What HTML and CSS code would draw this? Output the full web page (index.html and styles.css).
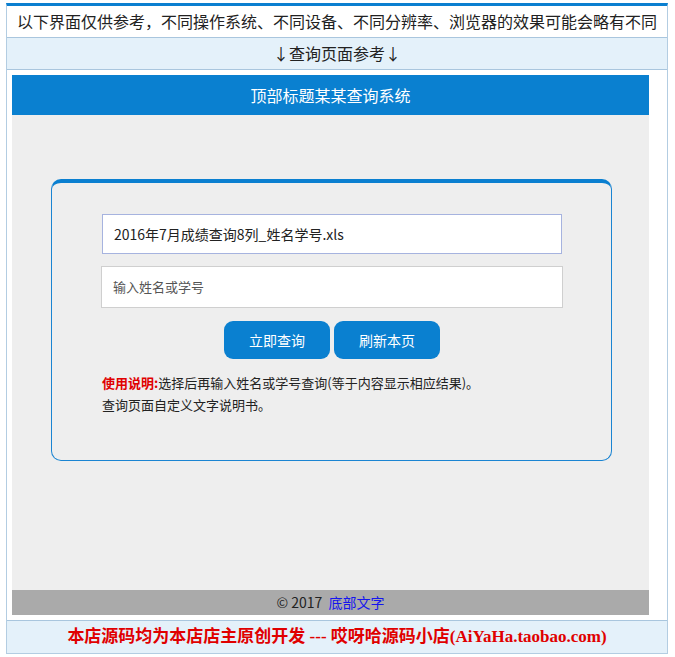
FILE: index.html
```html
<!DOCTYPE html>
<html lang="zh-CN">
<head>
<meta charset="utf-8">
<title>查询系统</title>
<link rel="stylesheet" href="styles.css">
</head>
<body>
<div class="frame">
  <div class="note">以下界面仅供参考，不同操作系统、不同设备、不同分辨率、浏览器的效果可能会略有不同</div>
  <div class="tip">↓查询页面参考↓</div>
  <div class="viewport">
    <div class="header">顶部标题某某查询系统</div>
    <div class="main">
      <div class="card">
        <div class="field field-select">2016年7月成绩查询8列_姓名学号.xls</div>
        <div class="field field-input">输入姓名或学号</div>
        <div class="buttons">
          <span class="btn">立即查询</span>
          <span class="btn">刷新本页</span>
        </div>
        <div class="desc">
          <p><b class="red">使用说明:</b>选择后再输入姓名或学号查询(等于内容显示相应结果)。</p>
          <p>查询页面自定义文字说明书。</p>
        </div>
      </div>
    </div>
    <div class="footer">© 2017 &nbsp;<a href="#" class="flink">底部文字</a></div>
  </div>
  <div class="shop">本店源码均为本店店主原创开发 --- 哎呀哈源码小店(AiYaHa.taobao.com)</div>
</div>
</body>
</html>
```

FILE: styles.css
```css
* { box-sizing: border-box; }
html, body { margin: 0; padding: 0; background: #fff; }
body {
  font-family: "Noto Sans CJK SC", "Noto Sans", sans-serif;
  color: #222;
}
.frame {
  margin: 3px 0 0 6px;
  width: 662px;
  border: 1px solid #b3cde2;
  border-top: 3px solid #0a7fd0;
}
.note {
  height: 32px;
  line-height: 31px;
  border-bottom: 1px solid #a9c6de;
  text-align: center;
  font-size: 16px;
  color: #222;
  white-space: nowrap;
  overflow: hidden;
}
.tip {
  height: 32px;
  line-height: 31px;
  border-bottom: 1px solid #a9c6de;
  background: #e4f1fa;
  text-align: center;
  font-size: 16px;
  color: #222;
}
.viewport {
  padding: 5px 18px 5px 5px;
}
.header {
  height: 40px;
  line-height: 40px;
  background: #0a80d0;
  color: #fff;
  text-align: center;
  font-size: 16px;
}
.main {
  background: #eeeeee;
  height: 475px;
  padding: 64px 37px 0 39px;
}
.card {
  height: 282px;
  border: 1px solid #1a84d2;
  border-top: 4px solid #0a7fd0;
  border-radius: 10px;
  padding: 31px 0 0 50px;
}
.field {
  background: #fff;
  width: 460px;
  padding-left: 11px;
  white-space: nowrap;
}
.field-select {
  height: 40px;
  line-height: 38px;
  border: 1px solid #a6b3df;
  font-size: 14px;
  color: #222;
}
.field-input {
  margin-top: 12px;
  margin-left: -1px;
  width: 462px;
  height: 42px;
  line-height: 40px;
  border: 1px solid #cfcfcf;
  font-size: 13px;
  color: #555;
}
.buttons {
  display: flex;
  justify-content: center;
  gap: 4px;
  width: 460px;
  margin-top: 13px;
}
.btn {
  width: 106px;
  height: 38px;
  line-height: 38px;
  border-radius: 9px;
  background: #0a80d0;
  color: #fff;
  text-align: center;
  font-size: 14px;
}
.desc {
  margin-top: 13px;
  font-size: 13px;
  line-height: 22px;
  color: #222;
}
.desc p { margin: 0; }
.red { color: #e00000; font-weight: bold; }
.footer {
  height: 25px;
  line-height: 25px;
  background: #aaaaaa;
  text-align: center;
  font-size: 14px;
  color: #222;
}
.flink { color: #1515ee; text-decoration: none; }
.shop {
  height: 33px;
  line-height: 31px;
  border-top: 1px solid #a9c6de;
  background: #e4f1fa;
  text-align: center;
  font-family: "Liberation Serif", "Noto Sans CJK SC", serif;
  font-weight: bold;
  font-size: 17px;
  color: #e00000;
  white-space: nowrap;
}
```
